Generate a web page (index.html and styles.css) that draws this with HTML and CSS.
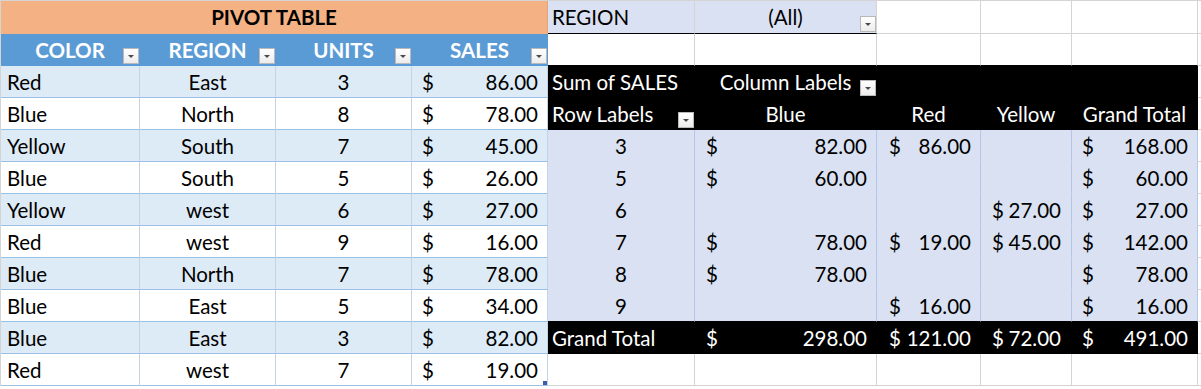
FILE: index.html
```html
<!DOCTYPE html>
<html>
<head>
<meta charset="utf-8">
<link rel="stylesheet" href="styles.css">
</head>
<body>
<div class="sheet">
  <!-- row 1 -->
  <div class="cell title">PIVOT TABLE</div>
  <div class="cell filt lbl">REGION</div>
  <div class="cell filt ctr last-filt">(All)<span class="btn"></span></div>
  <div class="cell"></div><div class="cell"></div><div class="cell"></div><div class="cell j"></div>
  <!-- row 2 -->
  <div class="cell hd">COLOR<span class="btn"></span></div>
  <div class="cell hd">REGION<span class="btn"></span></div>
  <div class="cell hd">UNITS<span class="btn"></span></div>
  <div class="cell hd">SALES<span class="btn"></span></div>
  <div class="cell above-blk"></div><div class="cell above-blk"></div><div class="cell above-blk"></div><div class="cell above-blk"></div><div class="cell above-blk"></div><div class="cell j"></div>
  <!-- row 3 -->
  <div class="cell t band lbl">Red</div><div class="cell t band ctr">East</div><div class="cell t band ctr">3</div><div class="cell t band money"><span>$</span><span>86.00</span></div>
  <div class="cell pvh lbl">Sum of SALES</div><div class="cell pvh ctr">Column Labels<span class="btn"></span></div><div class="cell pvh"></div><div class="cell pvh"></div><div class="cell pvh"></div><div class="cell j"></div>
  <!-- row 4 -->
  <div class="cell t lbl">Blue</div><div class="cell t ctr">North</div><div class="cell t ctr">8</div><div class="cell t money"><span>$</span><span>78.00</span></div>
  <div class="cell pvh lbl">Row Labels<span class="btn"></span></div><div class="cell pvh ctr">Blue</div><div class="cell pvh ctr">Red</div><div class="cell pvh ctr">Yellow</div><div class="cell pvh ctr">Grand Total</div><div class="cell j"></div>
  <!-- row 5 -->
  <div class="cell t band lbl">Yellow</div><div class="cell t band ctr">South</div><div class="cell t band ctr">7</div><div class="cell t band money"><span>$</span><span>45.00</span></div>
  <div class="cell pvd ctr">3</div><div class="cell pvd money pf"><span>$</span><span>82.00</span></div><div class="cell pvd money pg"><span>$</span><span>86.00</span></div><div class="cell pvd"></div><div class="cell pvd money pi"><span>$</span><span>168.00</span></div><div class="cell j"></div>
  <!-- row 6 -->
  <div class="cell t lbl">Blue</div><div class="cell t ctr">South</div><div class="cell t ctr">5</div><div class="cell t money"><span>$</span><span>26.00</span></div>
  <div class="cell pvd ctr">5</div><div class="cell pvd money pf"><span>$</span><span>60.00</span></div><div class="cell pvd"></div><div class="cell pvd"></div><div class="cell pvd money pi"><span>$</span><span>60.00</span></div><div class="cell j"></div>
  <!-- row 7 -->
  <div class="cell t band lbl">Yellow</div><div class="cell t band ctr">west</div><div class="cell t band ctr">6</div><div class="cell t band money"><span>$</span><span>27.00</span></div>
  <div class="cell pvd ctr">6</div><div class="cell pvd"></div><div class="cell pvd"></div><div class="cell pvd money ph"><span>$</span><span>27.00</span></div><div class="cell pvd money pi"><span>$</span><span>27.00</span></div><div class="cell j"></div>
  <!-- row 8 -->
  <div class="cell t lbl">Red</div><div class="cell t ctr">west</div><div class="cell t ctr">9</div><div class="cell t money"><span>$</span><span>16.00</span></div>
  <div class="cell pvd ctr">7</div><div class="cell pvd money pf"><span>$</span><span>78.00</span></div><div class="cell pvd money pg"><span>$</span><span>19.00</span></div><div class="cell pvd money ph"><span>$</span><span>45.00</span></div><div class="cell pvd money pi"><span>$</span><span>142.00</span></div><div class="cell j"></div>
  <!-- row 9 -->
  <div class="cell t band lbl">Blue</div><div class="cell t band ctr">North</div><div class="cell t band ctr">7</div><div class="cell t band money"><span>$</span><span>78.00</span></div>
  <div class="cell pvd ctr">8</div><div class="cell pvd money pf"><span>$</span><span>78.00</span></div><div class="cell pvd"></div><div class="cell pvd"></div><div class="cell pvd money pi"><span>$</span><span>78.00</span></div><div class="cell j"></div>
  <!-- row 10 -->
  <div class="cell t lbl">Blue</div><div class="cell t ctr">East</div><div class="cell t ctr">5</div><div class="cell t money"><span>$</span><span>34.00</span></div>
  <div class="cell pvd pvlast ctr">9</div><div class="cell pvd pvlast"></div><div class="cell pvd pvlast money pg"><span>$</span><span>16.00</span></div><div class="cell pvd pvlast"></div><div class="cell pvd pvlast money pi"><span>$</span><span>16.00</span></div><div class="cell j"></div>
  <!-- row 11 -->
  <div class="cell t band lbl">Blue</div><div class="cell t band ctr">East</div><div class="cell t band ctr">3</div><div class="cell t band money"><span>$</span><span>82.00</span></div>
  <div class="cell pvh lbl">Grand Total</div><div class="cell pvh money pf"><span>$</span><span>298.00</span></div><div class="cell pvh money pg"><span>$</span><span>121.00</span></div><div class="cell pvh money ph"><span>$</span><span>72.00</span></div><div class="cell pvh money pi"><span>$</span><span>491.00</span></div><div class="cell j"></div>
  <!-- row 12 -->
  <div class="cell t lbl">Red</div><div class="cell t ctr">west</div><div class="cell t ctr">7</div><div class="cell t money"><span>$</span><span>19.00</span><span class="handle"></span></div>
  <div class="cell"></div><div class="cell"></div><div class="cell"></div><div class="cell"></div><div class="cell"></div><div class="cell j"></div>
</div>
</body>
</html>
```

FILE: styles.css
```css
html, body {
  margin: 0;
  padding: 0;
  background: #ffffff;
}

body {
  font-family: Lato, "Open Sans", sans-serif;
  font-size: 20.5px;
  color: #000000;
}

.sheet {
  display: grid;
  grid-template-columns: 139px 136px 136px 136px 147px 182px 104px 91px 126px 1fr;
  grid-template-rows: 33px repeat(11, 32px);
  border-top: 1px solid #d4d4d4;
  border-left: 1px solid #d4d4d4;
  overflow: hidden;
}

.cell {
  position: relative;
  box-sizing: border-box;
  border-right: 1px solid #d4d4d4;
  border-bottom: 1px solid #d4d4d4;
  line-height: 31px;
  padding-top: 1px;
  white-space: nowrap;
  overflow: hidden;
}

.cell.j {
  border-right: none;
}

.lbl {
  padding-left: 6px;
}

.ctr {
  text-align: center;
}

.title {
  grid-column: span 4;
  background: #f4b183;
  border-right-color: #e3a57b;
  border-bottom-color: #f4b183;
  font-weight: bold;
  text-align: center;
  padding-left: 0;
}

.filt {
  background: #d9e1f2;
  border-bottom: 1px solid #000000;
}

.filt.lbl {
  padding-left: 4px;
}

.hd {
  background: #5b9bd5;
  color: #ffffff;
  font-weight: bold;
  text-align: center;
  border-right-color: #5b9bd5;
  border-bottom-color: #5b9bd5;
}

.above-blk {
  border-bottom-color: #000000;
}

.t {
  border-bottom-color: #9bc2e6;
  border-right-color: #c5d3e4;
}

.band {
  background: #ddebf7;
}

.money {
  display: flex;
  justify-content: space-between;
  padding-left: 10px;
  padding-right: 9px;
}

.pvh {
  background: #000000;
  color: #ffffff;
  border-right-color: #000000;
  border-bottom-color: #000000;
}

.pvh.lbl {
  padding-left: 4px;
}

.pvd {
  background: #d9e1f2;
  border-right-color: #b4c6e7;
  border-bottom-color: #d9e1f2;
}

.pvd.pvlast {
  border-bottom-color: #000000;
}

.pf {
  padding-left: 11px;
  padding-right: 9px;
}

.pg {
  padding-left: 12px;
  padding-right: 9px;
}

.ph {
  padding-left: 11px;
  padding-right: 10px;
}

.pi {
  padding-left: 10px;
  padding-right: 9px;
}

.btn {
  position: absolute;
  right: 0;
  bottom: 1px;
  width: 16px;
  height: 16px;
  box-sizing: border-box;
  border: 1px solid #b9b9b9;
  background: linear-gradient(#ffffff, #ececec);
}

.btn::after {
  content: "";
  position: absolute;
  left: 4px;
  top: 6px;
  border-left: 3px solid transparent;
  border-right: 3px solid transparent;
  border-top: 3px solid #4a4a4a;
}

.handle {
  position: absolute;
  right: 0;
  bottom: 0;
  width: 4px;
  height: 4px;
  background: #3a5fa8;
}
```
